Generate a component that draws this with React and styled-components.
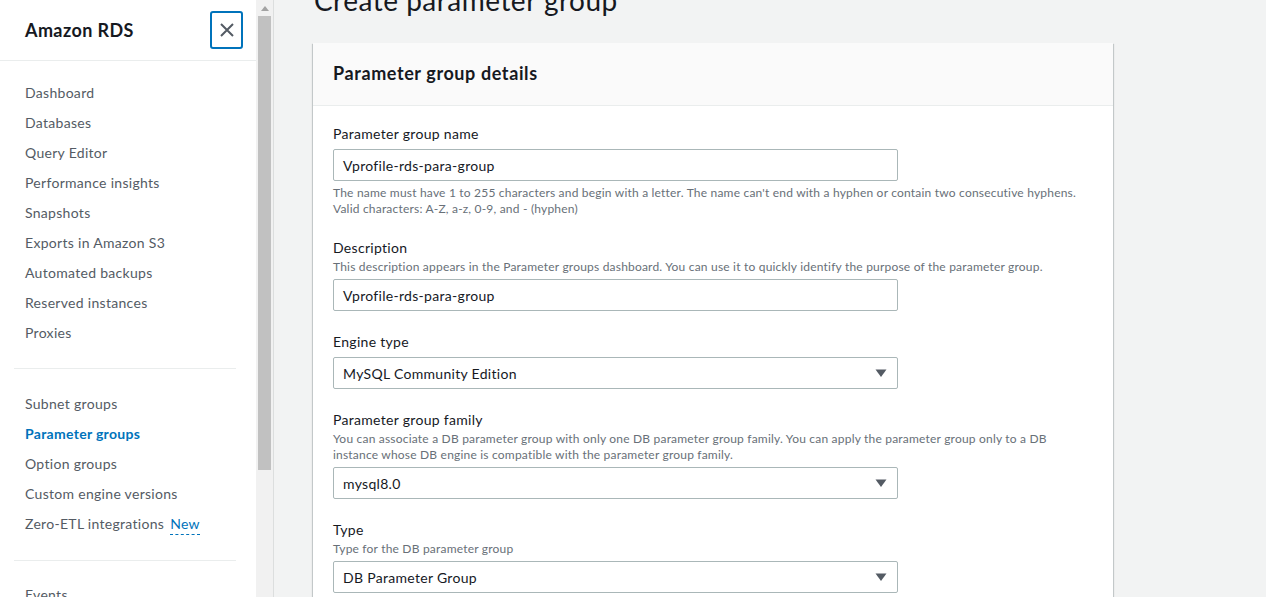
import React from "react";
import styled, { createGlobalStyle } from "styled-components";

const GlobalStyle = createGlobalStyle`
  html, body {
    margin: 0;
    padding: 0;
    height: 100%;
    overflow: hidden;
  }
  body {
    font-family: Lato, "Noto Sans", Arial, sans-serif;
    color: #16191f;
    background: #f2f3f3;
  }
`;

const Layout = styled.div`
  display: flex;
  height: 597px;
  overflow: hidden;
`;

const Sidebar = styled.nav`
  width: 256px;
  flex: none;
  background: #fff;
  display: flex;
  flex-direction: column;
  overflow: hidden;
`;

const SideHeader = styled.div`
  flex: none;
  height: 60px;
  border-bottom: 1px solid #eaeded;
  display: flex;
  align-items: center;
  justify-content: space-between;
  padding: 0 13px 0 25px;

  h2 {
    margin: 0;
    font-size: 18px;
    font-weight: 700;
    letter-spacing: 0.4px;
    color: #16191f;
  }
`;

const CloseBtn = styled.button`
  width: 33px;
  height: 38px;
  border: 2px solid #0073bb;
  border-radius: 3px;
  background: #fff;
  display: flex;
  align-items: center;
  justify-content: center;
  padding: 0;
`;

const NavList = styled.ul`
  flex: none;
  list-style: none;
  padding: ${(p) => p.$pad || "0"};
  border-top: ${(p) => (p.$divider ? "1px solid #eaeded" : "none")};
  margin: ${(p) => (p.$divider ? "0 20px 0 14px" : "0")};
`;

const NavItem = styled.li`
  font-size: 14px;
  line-height: 30px;
  letter-spacing: 0.3px;
  padding-left: ${(p) => (p.$inset ? "11px" : "25px")};
  color: ${(p) => (p.$active ? "#0073bb" : "#545b64")};
  font-weight: ${(p) => (p.$active ? 700 : 400)};
  white-space: nowrap;
`;

const NewTag = styled.span`
  color: #0073bb;
  margin-left: 6px;
  border-bottom: 1px dashed #0073bb;
  padding-bottom: 2px;
`;

const Scrollbar = styled.div`
  width: 17px;
  flex: none;
  background: #f1f1f1;
  display: flex;
  flex-direction: column;
  align-items: center;
`;

const ScrollArrow = styled.div`
  height: 16px;
  display: flex;
  align-items: center;
  justify-content: center;
`;

const ScrollThumb = styled.div`
  width: 13px;
  height: 454px;
  background: #c1c1c1;
`;

const Main = styled.main`
  flex: 1;
  border-left: 1px solid #dcdede;
  background: #f2f3f3;
  padding: 0 0 0 39px;
  overflow: hidden;
`;

const PageTitle = styled.h1`
  margin: -20px 0 0 1px;
  font-size: 28px;
  font-weight: 400;
  letter-spacing: 0.5px;
  line-height: 40px;
  color: #16191f;
`;

const Card = styled.section`
  width: 800px;
  margin-top: 23px;
  background: #fff;
  box-shadow: 0 1px 1px 0 rgba(0, 28, 36, 0.3), 1px 1px 1px 0 rgba(0, 28, 36, 0.15),
    -1px 1px 1px 0 rgba(0, 28, 36, 0.15);
`;

const CardHeader = styled.header`
  height: 63px;
  box-sizing: border-box;
  padding: 0 0 3px 20px;
  background: #fafafa;
  border-bottom: 1px solid #eaeded;
  display: flex;
  align-items: center;

  h2 {
    margin: 0;
    font-size: 18px;
    font-weight: 700;
    letter-spacing: 0.6px;
    color: #16191f;
  }
`;

const CardBody = styled.div`
  padding: 18px 20px 20px;
  display: flex;
  flex-direction: column;
  gap: 21px;
`;

const Field = styled.div`
  display: flex;
  flex-direction: column;
`;

const Label = styled.label`
  font-size: 14px;
  line-height: 20px;
  letter-spacing: 0.3px;
  color: #16191f;
`;

const Hint = styled.div`
  font-size: 12px;
  line-height: 16px;
  letter-spacing: 0.2px;
  color: #687078;
  margin-top: ${(p) => (p.$below ? "4px" : "1px")};
  margin-bottom: ${(p) => (p.$below ? "0" : "4px")};
`;

const Control = styled.div`
  width: 565px;
  height: 32px;
  box-sizing: border-box;
  border: 1px solid #aab7b8;
  border-radius: 2px;
  margin-top: ${(p) => (p.$gap ? "5px" : "0")};
  display: flex;
  align-items: center;
  justify-content: space-between;
  padding: 0 10px 0 9px;
  font-size: 14px;
  letter-spacing: 0.3px;
  color: #16191f;
  background: #fff;
`;

const Caret = () => (
  <svg width="12" height="10" viewBox="0 0 12 10">
    <path d="M0.5 1.5 H11.5 L6 9 Z" fill="#545b64" />
  </svg>
);

function App() {
  return (
    <>
      <GlobalStyle />
      <Layout>
        <Sidebar>
          <SideHeader>
            <h2>Amazon RDS</h2>
            <CloseBtn aria-label="Close">
              <svg width="16" height="16" viewBox="0 0 16 16">
                <path d="M2 2 L14 14 M14 2 L2 14" stroke="#545b64" strokeWidth="2" />
              </svg>
            </CloseBtn>
          </SideHeader>
          <NavList $pad="17px 0 20px">
            <NavItem>Dashboard</NavItem>
            <NavItem>Databases</NavItem>
            <NavItem>Query Editor</NavItem>
            <NavItem>Performance insights</NavItem>
            <NavItem>Snapshots</NavItem>
            <NavItem>Exports in Amazon S3</NavItem>
            <NavItem>Automated backups</NavItem>
            <NavItem>Reserved instances</NavItem>
            <NavItem>Proxies</NavItem>
          </NavList>
          <NavList $divider $pad="20px 0 21px">
            <NavItem $inset>Subnet groups</NavItem>
            <NavItem $inset $active>Parameter groups</NavItem>
            <NavItem $inset>Option groups</NavItem>
            <NavItem $inset>Custom engine versions</NavItem>
            <NavItem $inset>
              Zero-ETL integrations<NewTag>New</NewTag>
            </NavItem>
          </NavList>
          <NavList $divider $pad="19px 0 0">
            <NavItem $inset>Events</NavItem>
          </NavList>
        </Sidebar>
        <Scrollbar>
          <ScrollArrow>
            <svg width="8" height="5" viewBox="0 0 8 5">
              <path d="M0 5 L4 0 L8 5 Z" fill="#a3a3a3" />
            </svg>
          </ScrollArrow>
          <ScrollThumb />
        </Scrollbar>
        <Main>
          <PageTitle>Create parameter group</PageTitle>
          <Card>
            <CardHeader>
              <h2>Parameter group details</h2>
            </CardHeader>
            <CardBody>
              <Field>
                <Label>Parameter group name</Label>
                <Control $gap>Vprofile-rds-para-group</Control>
                <Hint $below>
                  The name must have 1 to 255 characters and begin with a letter. The name can't end with a
                  hyphen or contain two consecutive hyphens.
                  <br />
                  Valid characters: A-Z, a-z, 0-9, and - (hyphen)
                </Hint>
              </Field>
              <Field>
                <Label>Description</Label>
                <Hint>
                  This description appears in the Parameter groups dashboard. You can use it to quickly identify
                  the purpose of the parameter group.
                </Hint>
                <Control>Vprofile-rds-para-group</Control>
              </Field>
              <Field>
                <Label>Engine type</Label>
                <Control $gap>
                  MySQL Community Edition
                  <Caret />
                </Control>
              </Field>
              <Field>
                <Label>Parameter group family</Label>
                <Hint>
                  You can associate a DB parameter group with only one DB parameter group family. You can apply
                  the parameter group only to a DB instance whose DB engine is compatible with the parameter
                  group family.
                </Hint>
                <Control>
                  mysql8.0
                  <Caret />
                </Control>
              </Field>
              <Field>
                <Label>Type</Label>
                <Hint>Type for the DB parameter group</Hint>
                <Control>
                  DB Parameter Group
                  <Caret />
                </Control>
              </Field>
            </CardBody>
          </Card>
        </Main>
      </Layout>
    </>
  );
}

export default App;
